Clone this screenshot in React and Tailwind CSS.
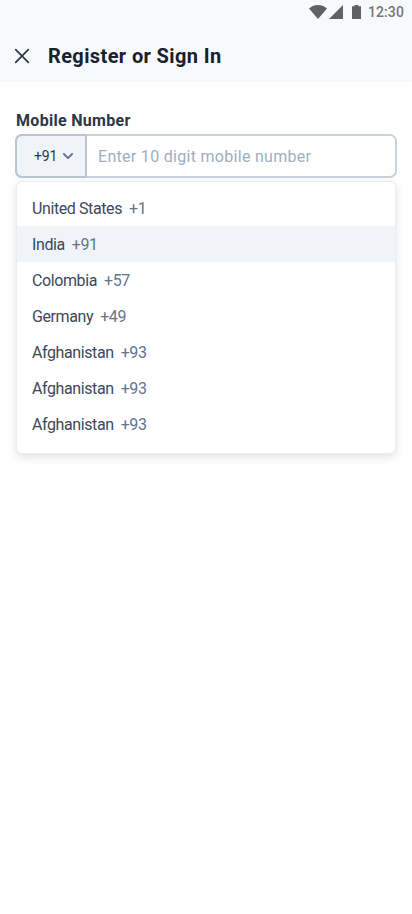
const countries = [
  { name: "United States", code: "+1" },
  { name: "India", code: "+91", selected: true },
  { name: "Colombia", code: "+57" },
  { name: "Germany", code: "+49" },
  { name: "Afghanistan", code: "+93" },
  { name: "Afghanistan", code: "+93" },
  { name: "Afghanistan", code: "+93" },
];

function StatusBar() {
  return (
    <div className="flex h-6 items-center justify-end pr-2 text-[#616161]">
      <svg width="54" height="24" viewBox="0 0 54 24" fill="currentColor" aria-hidden="true">
        <path d="M0 8.400C2.600 6.200 5.700 5 9 5s6.400 1.200 9 3.400L9 19z" />
        <path d="M34 5v14H20z" />
        <path d="M43 6.300h2.500V5h4v1.300H52V19h-9z" />
      </svg>
      <span className="ml-[5px] text-sm leading-6 font-medium tracking-[0.1px] text-[#757778]">12:30</span>
    </div>
  );
}

function Header() {
  return (
    <header className="h-20 bg-[#f7fafc] shadow-[0_1px_2px_rgba(0,0,0,0.06)]">
      <StatusBar />
      <div className="flex h-16 items-center pl-[14px]">
        <svg width="16" height="16" viewBox="0 0 16 16" fill="none" stroke="#2d3748" strokeWidth="1.700" strokeLinecap="round" aria-hidden="true">
          <path d="M1.700 1.700l12.600 12.600M14.300 1.700L1.700 14.300" />
        </svg>
        <h1 className="ml-[18px] text-xl leading-6 font-bold tracking-[0.38px] text-[#1a202c]">Register or Sign In</h1>
      </div>
    </header>
  );
}

function PhoneField() {
  return (
    <div className="mt-[3px] flex h-11 rounded-[7px] border-2 border-[#cad2dd]">
      <div className="-my-0.5 -ml-0.5 flex w-[72px] items-center rounded-l-[7px] border-2 border-[#b9c5d3] bg-[#f0f4f9] pl-[17px]">
        <span className="text-sm tracking-[-0.2px] text-[#2d3748]">+91</span>
        <svg className="ml-[5px]" width="12" height="8" viewBox="0 0 12 8" fill="none" stroke="#64748b" strokeWidth="1.900" strokeLinecap="round" strokeLinejoin="round" aria-hidden="true">
          <path d="M1.900 2L6 6.100l4.100-4.100" />
        </svg>
      </div>
      <span className="pt-px pl-[11px] text-base leading-10 tracking-[0.3px] text-[#a0aec0]">Enter 10 digit mobile number</span>
    </div>
  );
}

function CountryList() {
  return (
    <ul className="mx-px mt-[3px] h-[273px] rounded-md border border-[#e8eef5] bg-white pt-2 shadow-[0_3px_8px_rgba(0,0,0,0.12)]">
      {countries.map((c, i) => (
        <li
          key={i}
          className={
            c.selected
              ? "flex h-9 items-center gap-[7px] bg-[#f0f4f8] pt-0.5 pl-[15px] text-base tracking-tight"
              : "flex h-9 items-center gap-[7px] pt-0.5 pl-[15px] text-base tracking-tight"
          }
        >
          <span className="text-[#3b485d]">{c.name}</span>
          <span className="text-[#64748b]">{c.code}</span>
        </li>
      ))}
    </ul>
  );
}

export default function App() {
  return (
    <div className="min-h-screen bg-white font-['Roboto',sans-serif]">
      <Header />
      <main className="px-[15px] pt-[31px]">
        <label className="block pl-px text-base leading-5 font-bold tracking-[0.3px] text-[#2d3748]">Mobile Number</label>
        <PhoneField />
        <CountryList />
      </main>
    </div>
  );
}
